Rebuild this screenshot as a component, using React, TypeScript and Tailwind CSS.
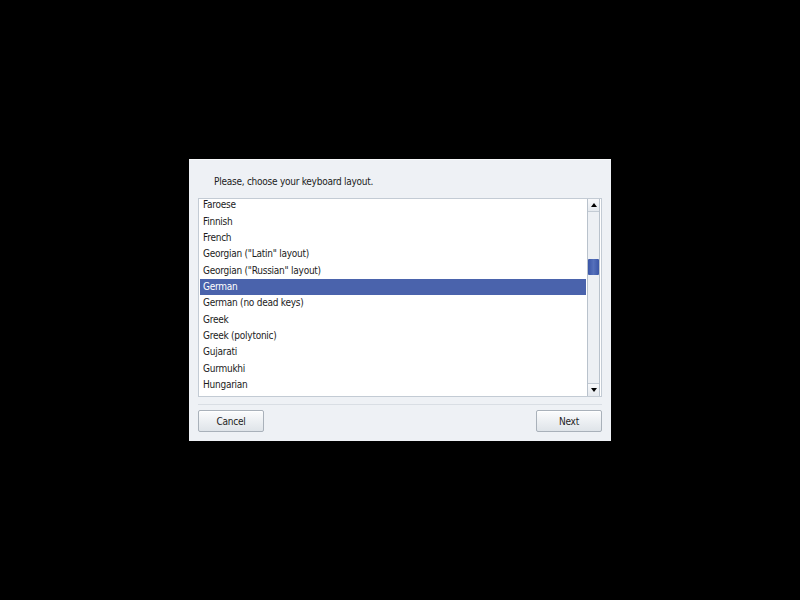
import React, { useState } from 'react';

const LAYOUTS: string[] = [
  'Faroese',
  'Finnish',
  'French',
  'Georgian ("Latin" layout)',
  'Georgian ("Russian" layout)',
  'German',
  'German (no dead keys)',
  'Greek',
  'Greek (polytonic)',
  'Gujarati',
  'Gurmukhi',
  'Hungarian',
];

const font = { fontFamily: '"DejaVu Sans Condensed", "DejaVu Sans", "Liberation Sans", sans-serif' };

const DialogButton: React.FC<{ label: string }> = ({ label }) => (
  <button className="w-[66px] h-[22px] rounded-[2px] border border-[#a9b1ba] bg-gradient-to-b from-[#fbfcfd] to-[#dfe4e9] text-[10px] text-[#1c1c1c] shadow-[inset_0_1px_0_#ffffff]">
    {label}
  </button>
);

export default function App() {
  const [selected, setSelected] = useState(5);

  return (
    <div className="w-[800px] h-[600px] bg-black flex items-center justify-center font-stretch-condensed tracking-[-0.25px]" style={font}>
      <div className="w-[422px] h-[282px] bg-[#eef1f5] border-t border-[#f7f9fb] flex flex-col">
        {/* Header */}
        <div className="h-[38px] pl-[25px] pt-[16px] text-[10px] text-[#1c1c1c] leading-[12px]">
          Please, choose your keyboard layout.
        </div>

        {/* List with scrollbar */}
        <div className="mx-[9px] h-[199px] border border-[#c3cbd4] bg-white flex">
          <div className="flex-1 overflow-hidden pt-[1px] pl-[1px]">
            <div className="-mt-[3px]">
              {LAYOUTS.map((name, i) => (
                <div
                  key={name}
                  onClick={() => setSelected(i)}
                  className={`h-[16.36px] flex items-center pl-[3px] text-[10px] leading-none ${
                    i === selected ? 'bg-[#4a63ac] text-white' : 'text-[#1c1c1c]'
                  }`}
                >
                  {name}
                </div>
              ))}
            </div>
          </div>
          <div className="w-[13px] ml-[1px] mr-[1px] border-x border-[#b9c2cc] bg-[#edf0f4] flex flex-col">
            <div className="h-[13px] border-b border-[#c3cbd4] bg-gradient-to-b from-[#f8f9fb] to-[#e5e9ee] flex items-center justify-center">
              <div className="w-0 h-0 border-x-[3px] border-x-transparent border-b-[4px] border-b-black" />
            </div>
            <div className="flex-1 relative">
              <div className="absolute left-0 right-0 top-[47px] h-[16px] rounded-[1px] bg-gradient-to-r from-[#3a55a6] via-[#5570bb] to-[#3a55a6]" />
            </div>
            <div className="h-[13px] border-t border-[#c3cbd4] bg-gradient-to-b from-[#f8f9fb] to-[#e5e9ee] flex items-center justify-center">
              <div className="w-0 h-0 border-x-[3px] border-x-transparent border-t-[4px] border-t-black" />
            </div>
          </div>
        </div>

        {/* Separator */}
        <div className="mx-[9px] mt-[7px] border-t border-[#d9dee4]" />

        {/* Buttons */}
        <div className="flex justify-between px-[9px] pt-[5px]">
          <DialogButton label="Cancel" />
          <DialogButton label="Next" />
        </div>
      </div>
    </div>
  );
}
